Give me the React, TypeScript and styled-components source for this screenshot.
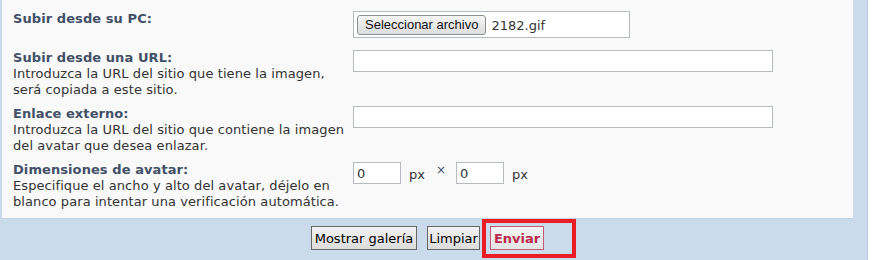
import React from "react";
import styled, { createGlobalStyle } from "styled-components";

const Global = createGlobalStyle`
  html, body { margin: 0; padding: 0; background: #ffffff; }
  body { font-family: "DejaVu Sans", Verdana, sans-serif; }
`;

const Page = styled.div`
  width: 867px;
  height: 260px;
  background: #cadcec;
  border-right: 1px solid #b9cde0;
  position: relative;
  overflow: hidden;
`;

const Panel = styled.div`
  margin-left: 2px;
  width: 851px;
  background: #f9f9f9;
  border-bottom: 1px solid #bfd3e5;
  padding: 11px 0 8px 11px;
  box-sizing: border-box;
  display: flex;
  flex-direction: column;
`;

const Row = styled.div<{ $tall?: number }>`
  display: flex;
  min-height: ${(p) => p.$tall ?? 48}px;
  margin-bottom: ${(p) => (p.$tall ? 11 : 8)}px;
  &:last-child { margin-bottom: 0; }
`;

const Term = styled.div`
  width: 340px;
  flex: none;
  font-size: 13px;
  line-height: 16px;
  letter-spacing: 0.08px;
  white-space: nowrap;
  color: #333333;
`;

const Label = styled.div`
  font-weight: bold;
  color: #425067;
`;

const Field = styled.div`
  display: flex;
  align-items: flex-start;
`;

const FileBox = styled.div`
  width: 277px;
  height: 27px;
  box-sizing: border-box;
  border: 1px solid #b4bac0;
  background: #ffffff;
  display: flex;
  align-items: center;
  padding-left: 3px;
  gap: 5px;
`;

const FileButton = styled.span`
  height: 20px;
  box-sizing: border-box;
  border: 1px solid #8e8f8f;
  border-radius: 3px;
  background: linear-gradient(#f6f6f6, #dddddd);
  font-family: "Liberation Sans", Arial, sans-serif;
  font-size: 13px;
  line-height: 18px;
  padding: 0 7px;
  color: #111;
`;

const FileName = styled.span`
  font-size: 13px;
  color: #333;
  margin-top: 2px;
`;

const TextInput = styled.input<{ $w: number }>`
  width: ${(p) => p.$w}px;
  height: 22px;
  box-sizing: border-box;
  border: 1px solid #b4bac0;
  background: #ffffff;
  font-family: "DejaVu Sans", Verdana, sans-serif;
  font-size: 13px;
  color: #333;
  padding: 0 3px;
  margin: 0;
  outline: none;
`;

const Unit = styled.span`
  font-size: 13px;
  color: #333;
  margin: 5px 0 0 8px;
`;

const Times = styled.span`
  font-size: 12px;
  color: #425067;
  margin: 1px 10px 0 11px;
`;

const Actions = styled.div`
  display: flex;
  justify-content: flex-start;
  padding: 7px 0 0 311px;
  gap: 10px;
`;

const Button = styled.button<{ $primary?: boolean; $w: number }>`
  width: ${(p) => p.$w}px;
  height: 24px;
  box-sizing: border-box;
  margin: 0;
  padding: 0;
  white-space: nowrap;
  font-family: "DejaVu Sans", Verdana, sans-serif;
  font-size: 13px;
  font-weight: ${(p) => (p.$primary ? "bold" : "normal")};
  color: ${(p) => (p.$primary ? "#bc2a4d" : "#000")};
  border: 1px solid ${(p) => (p.$primary ? "#c45a78" : "#666666")};
  background: ${(p) =>
    p.$primary ? "linear-gradient(#f4f4f4, #e4e4e4)" : "linear-gradient(#f2f2f2, #dcdcdc)"};
`;

const Highlight = styled.div`
  position: absolute;
  left: 482px;
  top: 219px;
  width: 94px;
  height: 39px;
  box-sizing: border-box;
  border: 4px solid #ea1c24;
  pointer-events: none;
`;

export default function App() {
  return (
    <>
      <Global />
      <Page>
        <Panel>
          <Row $tall={28}>
            <Term>
              <Label>Subir desde su PC:</Label>
            </Term>
            <Field>
              <FileBox>
                <FileButton>Seleccionar archivo</FileButton>
                <FileName>2182.gif</FileName>
              </FileBox>
            </Field>
          </Row>
          <Row>
            <Term>
              <Label>Subir desde una URL:</Label>
              Introduzca la URL del sitio que tiene la imagen,
              <br />
              será copiada a este sitio.
            </Term>
            <Field>
              <TextInput $w={420} defaultValue="" />
            </Field>
          </Row>
          <Row>
            <Term>
              <Label>Enlace externo:</Label>
              Introduzca la URL del sitio que contiene la imagen
              <br />
              del avatar que desea enlazar.
            </Term>
            <Field>
              <TextInput $w={420} defaultValue="" />
            </Field>
          </Row>
          <Row>
            <Term>
              <Label>Dimensiones de avatar:</Label>
              Especifique el ancho y alto del avatar, déjelo en
              <br />
              blanco para intentar una verificación automática.
            </Term>
            <Field>
              <TextInput $w={48} defaultValue="0" />
              <Unit>px</Unit>
              <Times>×</Times>
              <TextInput $w={48} defaultValue="0" />
              <Unit>px</Unit>
            </Field>
          </Row>
        </Panel>
        <Actions>
          <Button $w={106}>Mostrar galería</Button>
          <Button $w={53}>Limpiar</Button>
          <Button $w={54} $primary>Enviar</Button>
        </Actions>
        <Highlight />
      </Page>
    </>
  );
}
